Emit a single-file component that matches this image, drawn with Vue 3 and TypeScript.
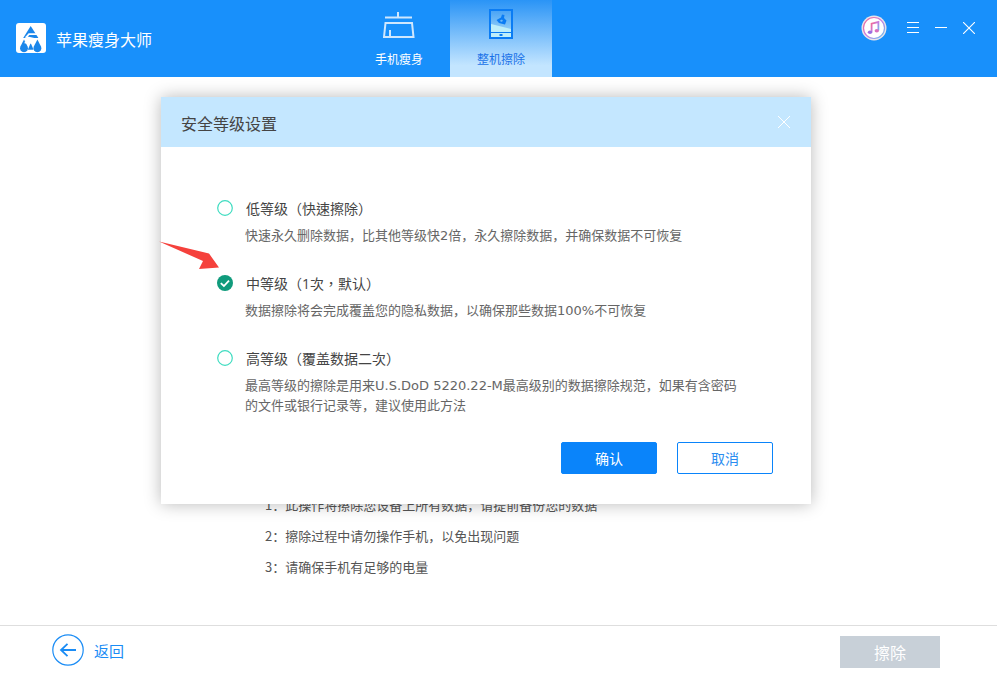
<script setup lang="ts">
interface Level { title: string; desc: string[]; checked: boolean }
const levels: Level[] = [
  { title: '低等级（快速擦除）', desc: ['快速永久删除数据，比其他等级快2倍，永久擦除数据，并确保数据不可恢复'], checked: false },
  { title: '中等级（1次，默认）', desc: ['数据擦除将会完成覆盖您的隐私数据，以确保那些数据100%不可恢复'], checked: true },
  { title: '高等级（覆盖数据二次）', desc: ['最高等级的擦除是用来U.S.DoD 5220.22-M最高级别的数据擦除规范，如果有含密码', '的文件或银行记录等，建议使用此方法'], checked: false },
]
const notes = ['1：此操作将擦除您设备上所有数据，请提前备份您的数据', '2：擦除过程中请勿操作手机，以免出现问题', '3：请确保手机有足够的电量']
</script>

<template>
  <div class="app">
    <header class="top">
      <div class="brand">
        <svg class="logo" width="30" height="30" viewBox="0 0 30 30">
          <rect width="30" height="30" rx="3" fill="#fff" />
          <path d="M14.7 3 L22.4 15 H7.2 Z" fill="#1a86ea" />
          <path d="M8 16.5 L11.6 23.4 A4 4 0 1 1 4.4 23.4 Z" fill="#1a86ea" />
          <path d="M21.4 16.5 L25 23.4 A4 4 0 1 1 17.8 23.4 Z" fill="#1a86ea" />
          <path d="M14.7 20 L17.6 26.8 H11.8 Z" fill="#1a86ea" />
          <path d="M21 11.2 H13 L10.4 14 L18 15.8 L15.5 19.6 H8.6" fill="none" stroke="#fff" stroke-width="1.7" />
        </svg>
        <span class="brand-name">苹果瘦身大师</span>
      </div>
      <nav class="tabs">
        <div class="tab">
          <svg class="tab-icon" width="32" height="26" viewBox="0 0 32 26" fill="none" stroke="#cfe7fd" stroke-width="2">
            <path d="M15 0 V5" />
            <path d="M2 5.5 H29" />
            <path d="M2.5 11 H29 L30.5 25 H1 Z" />
            <path d="M7 25 V18" />
          </svg>
          <span>手机瘦身</span>
        </div>
        <div class="tab active">
          <svg width="24" height="30" viewBox="0 0 24 30">
            <defs>
              <linearGradient id="scr" x1="0" y1="0" x2="0" y2="1">
                <stop offset="0" stop-color="#4aa4f6" />
                <stop offset="1" stop-color="#8ccbf8" />
              </linearGradient>
            </defs>
            <rect x="1" y="1" width="22" height="28" fill="#bdeefa" stroke="#0a7cf4" stroke-width="2" />
            <path d="M2 2 H22 V20 L2 15 Z" fill="url(#scr)" />
            <path d="M2 23 H22 V24 H2 Z" fill="#0a7cf4" />
            <rect x="10.5" y="25" width="3" height="2" fill="#0a7cf4" />
            <path d="M7.5 11 L12 8.5 L13 5.5 L15.5 6 L15 9 L17.5 11.5 L16 15.5 L10 14 Z" fill="#0a7cf4" />
            <path d="M11 11.5 L13 10.5 L14 12 L12 13 Z" fill="#6db8f7" />
          </svg>
          <span>整机擦除</span>
        </div>
      </nav>
      <div class="win">
        <svg width="26" height="26" viewBox="0 0 26 26">
          <defs>
            <linearGradient id="ring" x1="0" y1="0" x2="1" y2="1">
              <stop offset="0" stop-color="#f56a8f" />
              <stop offset="0.5" stop-color="#c77ae0" />
              <stop offset="1" stop-color="#5cc8f0" />
            </linearGradient>
          </defs>
          <circle cx="13" cy="13" r="12.5" fill="#e8e4ea" />
          <circle cx="13" cy="13" r="10.5" fill="#fff" stroke="url(#ring)" stroke-width="1.2" />
          <path d="M10.6 17 V8.6 L17.4 7 V15.6" fill="none" stroke="url(#ring)" stroke-width="1.8" />
          <ellipse cx="9" cy="17.2" rx="2.2" ry="1.8" fill="#9a6ee0" />
          <ellipse cx="15.8" cy="15.8" rx="2.2" ry="1.8" fill="#d86fc0" />
        </svg>
        <svg class="w-menu" width="12" height="12" viewBox="0 0 12 12" stroke="#fff" stroke-width="1">
          <path d="M0 .5 H12 M0 5.5 H12 M0 10.5 H12" />
        </svg>
        <svg class="w-min" width="12" height="12" viewBox="0 0 12 12" stroke="#fff" stroke-width="1">
          <path d="M0 5.5 H12" />
        </svg>
        <svg class="w-close" width="12" height="12" viewBox="0 0 12 12" stroke="#fff" stroke-width="1.1">
          <path d="M0 0 L12 12 M12 0 L0 12" />
        </svg>
      </div>
    </header>

    <main class="content">
      <p v-for="n in notes" :key="n" class="note">{{ n }}</p>
    </main>

    <footer class="foot">
      <div class="back">
        <svg width="32" height="32" viewBox="0 0 32 32" fill="none" stroke="#1a8cf5">
          <circle cx="16" cy="16" r="15.2" stroke-width="1.2" />
          <path d="M9 16 H24 M15.5 9.8 L9 16 L15.5 22.2" stroke-width="1.8" />
        </svg>
        <span>返回</span>
      </div>
      <button class="erase">擦除</button>
    </footer>

    <section class="modal">
      <div class="m-head">
        <span class="m-title">安全等级设置</span>
        <svg width="12" height="12" viewBox="0 0 12 12" stroke="#fff" stroke-width="1">
          <path d="M0 0 L12 12 M12 0 L0 12" />
        </svg>
      </div>
      <div class="m-body">
        <div v-for="l in levels" :key="l.title" class="level">
          <svg v-if="l.checked" class="radio" width="16" height="16" viewBox="0 0 16 16">
            <circle cx="8" cy="8" r="8" fill="#109b7c" />
            <path d="M3.8 8.2 L6.9 11 L12 5.6" fill="none" stroke="#fff" stroke-width="1.8" />
          </svg>
          <svg v-else class="radio" width="16" height="16" viewBox="0 0 16 16">
            <circle cx="8" cy="8" r="7.3" fill="#fff" stroke="#3fdcc0" stroke-width="1.2" />
          </svg>
          <div class="l-text">
            <div class="l-title">{{ l.title }}</div>
            <div v-for="d in l.desc" :key="d" class="l-desc">{{ d }}</div>
          </div>
        </div>
      </div>
      <div class="m-foot">
        <button class="ok">确认</button>
        <button class="cancel">取消</button>
      </div>
    </section>

    <svg class="arrow" width="62" height="32" viewBox="0 0 62 32">
      <path d="M0 .5 L50 12.5 L60 26.5 L40 28 L44 20 Z" fill="#f5413c" />
    </svg>
  </div>
</template>

<style>
html, body { margin: 0; background: #fff; }
</style>

<style scoped>
.app {
  position: relative;
  width: 997px;
  height: 674px;
  display: flex;
  flex-direction: column;
  overflow: hidden;
  background: #fff;
  font-family: "Noto Sans CJK SC", "Liberation Sans", sans-serif;
  color: #555;
}
.top {
  height: 77px;
  flex: none;
  background: #1890fb;
  display: flex;
  align-items: stretch;
  color: #fff;
}
.brand {
  width: 350px;
  padding-left: 16px;
  box-sizing: border-box;
  display: flex;
  align-items: center;
  gap: 10px;
}
.logo { margin-top: -1px; }
.brand-name { font-size: 16px; }
.tabs { display: flex; }
.tab {
  width: 100px;
  padding-right: 2px;
  display: flex;
  flex-direction: column;
  align-items: center;
  padding-top: 10px;
  box-sizing: border-box;
  font-size: 12px;
  color: #fff;
}
.tab-icon { margin: 2px 0 2px; }
.tab span { margin-top: 10px; line-height: 18px; }
.tab.active {
  width: 102px;
  padding-right: 0;
  background: linear-gradient(#2a94f6, #c3e5ff 85%);
  color: #1a72e8;
}
.tab.active svg { margin-top: -1px; margin-bottom: 1px; }
.win {
  margin-left: auto;
  display: flex;
  align-items: flex-start;
  padding-top: 15px;
  padding-right: 22px;
}
.win svg { display: block; }
.w-menu { margin: 7px 0 0 20px; }
.w-min { margin: 7px 0 0 16px; }
.w-close { margin: 7px 0 0 16px; }
.content {
  flex: 1;
  padding: 412px 0 0 265px;
  box-sizing: border-box;
}
.note {
  margin: 0;
  font-size: 13px;
  line-height: 31px;
  color: #555;
}
.foot {
  height: 48px;
  flex: none;
  border-top: 1px solid #dedede;
  display: flex;
  justify-content: space-between;
  align-items: center;
  padding: 0 57px 0 52px;
}
.back {
  display: flex;
  align-items: center;
  gap: 10px;
  color: #1a8cf5;
  font-size: 15px;
}
.erase {
  width: 100px;
  height: 32px;
  margin-top: 4px;
  border: 0;
  background: #c8d0d8;
  color: #fff;
  font-family: inherit;
  font-size: 16px;
  padding: 0;
}
.modal {
  position: absolute;
  left: 161px;
  top: 97px;
  width: 650px;
  height: 407px;
  background: #fff;
  box-shadow: 0 0 16px rgba(0, 0, 0, 0.28);
  display: flex;
  flex-direction: column;
}
.m-head {
  height: 50px;
  flex: none;
  background: #c4e7ff;
  display: flex;
  align-items: center;
  justify-content: space-between;
  padding: 0 21px 0 20px;
  font-size: 16px;
  color: #444;
}
.m-title { margin-top: 2px; }
.m-body {
  flex: 1;
  padding: 50px 0 0 56px;
}
.level {
  display: flex;
  align-items: flex-start;
  margin-bottom: 26px;
}
.radio { margin-top: 3px; flex: none; }
.l-text { margin-left: 13px; }
.l-title {
  font-family: "Open Sans", "Noto Sans CJK TC", sans-serif;
  font-size: 14px;
  line-height: 22px;
  margin-top: 1px;
  color: #444;
}
.l-desc {
  font-family: "DejaVu Sans", "Noto Sans CJK SC", sans-serif;
  font-size: 13px;
  line-height: 20px;
  margin-top: 6px;
  margin-left: -1px;
  color: #666;
}
.l-desc + .l-desc { margin-top: 0; }
.m-foot {
  flex: none;
  display: flex;
  justify-content: flex-end;
  gap: 20px;
  padding: 0 38px 34px 0;
}
.ok, .cancel {
  width: 96px;
  height: 32px;
  border-radius: 2px;
  font-family: inherit;
  font-size: 14px;
  padding: 0;
  box-sizing: border-box;
}
.ok { background: #0a84fa; border: 1px solid #0a84fa; color: #fff; }
.cancel { background: #fff; border: 1px solid #0a84fa; color: #2a8cf0; }
.arrow {
  position: absolute;
  left: 159px;
  top: 241px;
}
</style>
